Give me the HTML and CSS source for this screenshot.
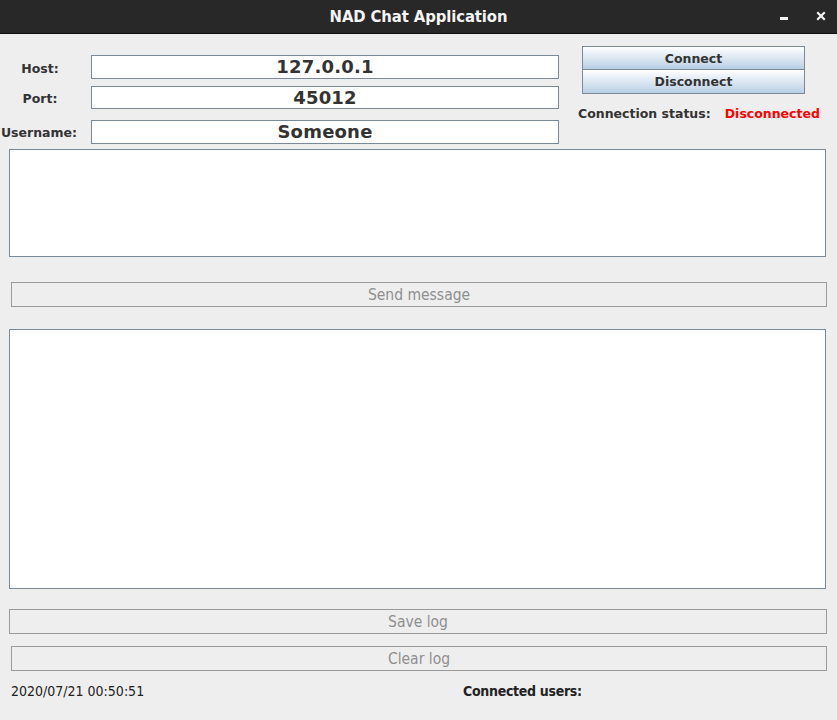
FILE: index.html
```html
<!DOCTYPE html>
<html>
<head>
<meta charset="utf-8">
<link rel="stylesheet" href="styles.css">
</head>
<body>
<div class="window">
  <div class="titlebar">
    <span class="title">NAD Chat Application</span>
    <div class="controls">
      <svg class="ctl-min" width="10" height="4" viewBox="0 0 10 4"><rect x="0" y="0" width="8" height="3" fill="#f2f2f2"/></svg>
      <svg class="ctl-close" width="10" height="10" viewBox="0 0 10 10"><path d="M2 2 L8 8 M8 2 L2 8" stroke="#f2f2f2" stroke-width="2.2" stroke-linecap="square"/></svg>
    </div>
  </div>
  <div class="content">
    <div class="top">
      <div class="form">
        <div class="row row-host"><span class="label">Host:</span><div class="field">127.0.0.1</div></div>
        <div class="row row-port"><span class="label">Port:</span><div class="field field-port">45012</div></div>
        <div class="row row-user"><span class="label">Username:</span><div class="field">Someone</div></div>
      </div>
      <div class="side">
        <button class="obtn obtn-connect">Connect</button>
        <button class="obtn obtn-disconnect">Disconnect</button>
        <div class="status"><span class="status-label">Connection status:</span><span class="status-value">Disconnected</span></div>
      </div>
    </div>
    <div class="area area-input"></div>
    <button class="dbtn dbtn-send">Send message</button>
    <div class="area area-log"></div>
    <button class="dbtn dbtn-save">Save log</button>
    <button class="dbtn dbtn-clear">Clear log</button>
    <div class="footer"><span class="clock">2020/07/21 00:50:51</span><span class="users">Connected users:</span></div>
  </div>
</div>
</body>
</html>
```
FILE: styles.css
```css
html, body {
  margin: 0;
  padding: 0;
  background: #eeeeee;
}
.window {
  width: 837px;
  height: 720px;
  background: #eeeeee;
  overflow: hidden;
}
.titlebar {
  height: 33px;
  background: #282828;
  border-bottom: 1px solid #0e0e0e;
  display: flex;
  align-items: center;
  justify-content: center;
  position: relative;
}
.title {
  font-family: "DejaVu Sans Condensed", "DejaVu Sans", sans-serif;
  font-weight: bold;
  font-size: 16.5px;
  color: #f4f4f4;
  letter-spacing: -0.1px;
}
.controls {
  position: absolute;
  right: 11px;
  top: 0;
  height: 33px;
  display: flex;
  align-items: center;
  gap: 26px;
}
.ctl-min { margin-top: 4px; }
.ctl-close { margin-top: -1px; }

.content {
  display: flex;
  flex-direction: column;
}
.top {
  height: 115px;
  display: flex;
}
.form {
  width: 559px;
  padding-top: 21px;
  box-sizing: border-box;
}
.row {
  display: grid;
  grid-template-columns: 80px 468px;
  column-gap: 11px;
  align-items: center;
}
.row-port { margin-top: 7px; }
.row-user { margin-top: 11px; }
.label {
  font-family: "DejaVu Sans", sans-serif;
  font-weight: bold;
  font-size: 12.5px;
  color: #333333;
  text-align: center;
  white-space: nowrap;
  margin-top: 2px;
}
.row-host .label { margin-top: 3px; }
.row-user .label { margin-left: -1px; margin-right: 1px; margin-top: 0; }
.field {
  height: 24px;
  box-sizing: border-box;
  background: #ffffff;
  border: 1px solid #7a8a99;
  font-family: "DejaVu Sans", sans-serif;
  font-weight: bold;
  font-size: 18px;
  line-height: 22px;
  color: #333333;
  text-align: center;
  letter-spacing: 0.2px;
}
.field-port { height: 23px; line-height: 21px; }
.side {
  margin-left: 19px;
  padding-top: 12px;
  display: flex;
  flex-direction: column;
}
.obtn {
  margin: 0 0 0 4px;
  width: 223px;
  height: 24px;
  box-sizing: border-box;
  border: 1px solid #7a8a99;
  background: linear-gradient(to bottom, #ffffff 0%, #e9f0f7 30%, #d6e3ef 60%, #b8cfe5 100%);
  font-family: "DejaVu Sans", sans-serif;
  font-weight: bold;
  font-size: 12.5px;
  color: #333333;
  padding: 0;
}
.obtn-disconnect { margin-top: -1px; height: 25px; }
.status {
  margin-top: 12px;
  height: 16px;
  display: flex;
  font-family: "DejaVu Sans", sans-serif;
  font-weight: bold;
  font-size: 12.5px;
  line-height: 16px;
  white-space: nowrap;
}
.status-label { color: #333333; }
.status-value { color: #ff0000; margin-left: 14px; }

.area {
  margin-left: 9px;
  width: 817px;
  box-sizing: border-box;
  background: #ffffff;
  border: 1px solid #7a8a99;
}
.area-input { height: 108px; }
.area-log { height: 260px; margin-top: 22px; }
.dbtn {
  height: 25px;
  box-sizing: border-box;
  background: #eeeeee;
  border: 1px solid #9a9a9a;
  font-family: "DejaVu Sans Condensed", "DejaVu Sans", sans-serif;
  font-size: 15.5px;
  color: #8e8e8e;
  padding: 0;
  text-align: center;
}
.dbtn-send { margin: 25px 0 0 11px; width: 816px; }
.dbtn-save { margin: 20px 0 0 9px; width: 818px; }
.dbtn-clear { margin: 12px 0 0 11px; width: 816px; }
.footer {
  margin-top: 12px;
  display: flex;
  font-family: "DejaVu Sans Condensed", "DejaVu Sans", sans-serif;
  font-size: 14px;
  line-height: 16px;
  color: #222222;
}
.clock { margin-left: 11px; width: 452px; }
.users { font-weight: bold; font-size: 14px; letter-spacing: -0.3px; }
```
